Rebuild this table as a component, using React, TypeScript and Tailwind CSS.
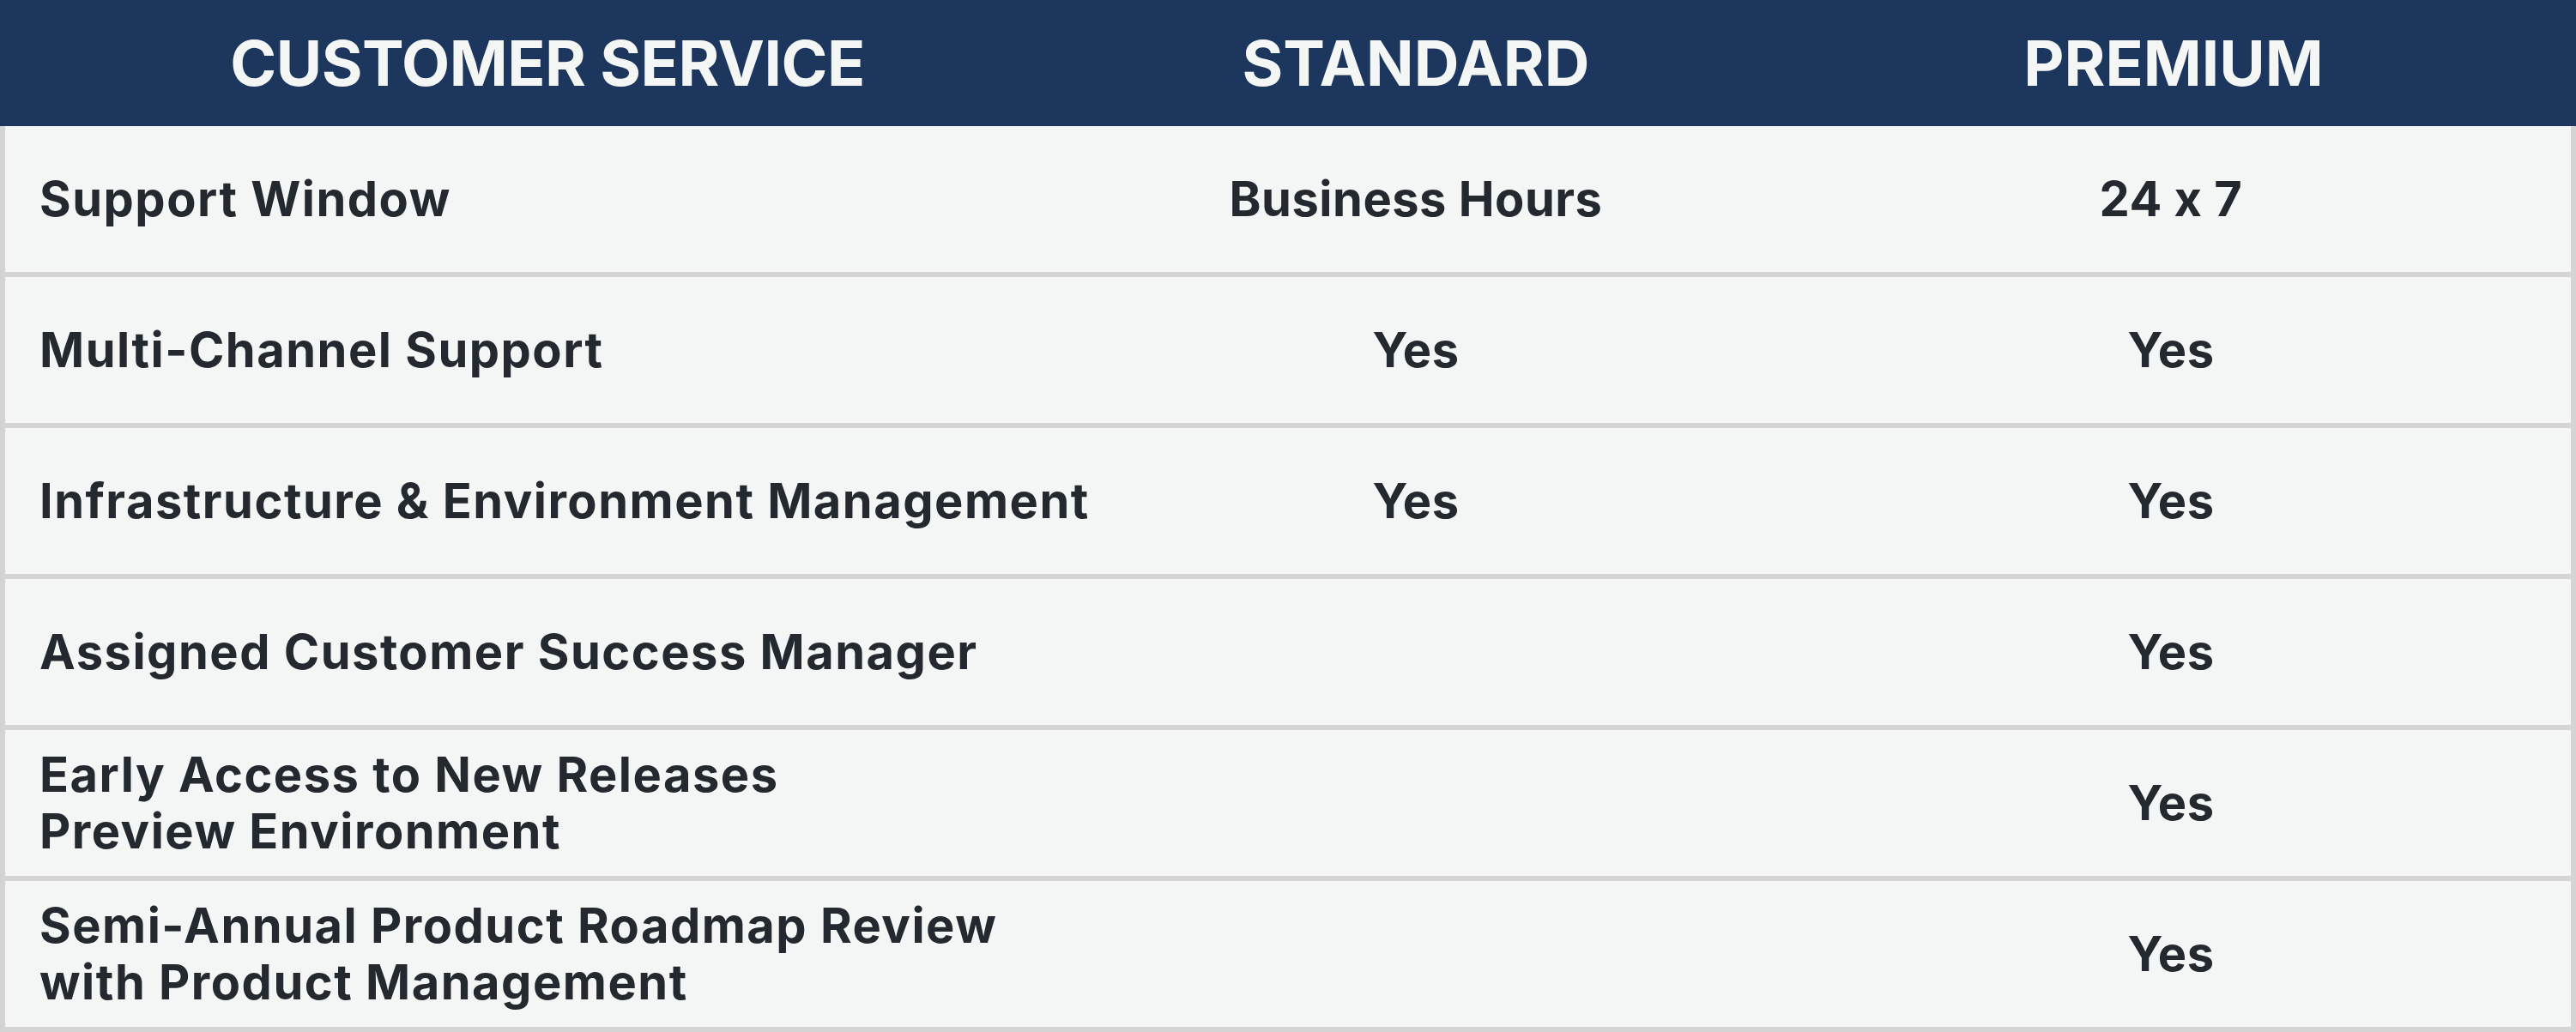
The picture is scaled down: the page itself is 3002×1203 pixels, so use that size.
const ROWS: { label: string[]; standard?: string; premium: string }[] = [
  { label: ['Support Window'], standard: 'Business Hours', premium: '24 x 7' },
  { label: ['Multi-Channel Support'], standard: 'Yes', premium: 'Yes' },
  { label: ['Infrastructure & Environment Management'], standard: 'Yes', premium: 'Yes' },
  { label: ['Assigned Customer Success Manager'], premium: 'Yes' },
  { label: ['Early Access to New Releases', 'Preview Environment'], premium: 'Yes' },
  { label: ['Semi-Annual Product Roadmap Review', 'with Product Management'], premium: 'Yes' },
];

export default function App() {
  return (
    <div className="w-[3002px] h-[1203px] bg-[#d4d4d4] font-['Inter',sans-serif] text-[#23292f] [font-feature-settings:'calt'_0]">
      <div className="flex h-[147px] items-center bg-[#1c365e] text-[#f4f6f5] text-[73px] font-bold">
        <div className="w-[1276px] text-center tracking-[-0.5px]">CUSTOMER SERVICE</div>
        <div className="w-[748px] text-center">STANDARD</div>
        <div className="flex-1 pl-[40px] text-center">PREMIUM</div>
      </div>
      {ROWS.map((row) => (
        <div
          key={row.label[0]}
          className="flex h-[176px] items-center border-x-[6px] border-b-[6px] border-[#d4d4d4] bg-[#f4f6f5] text-[56px] font-bold leading-[66px] tracking-[1.5px]"
        >
          <div className="w-[1270px] pl-[40px]">
            {row.label.map((line) => (
              <div key={line}>{line}</div>
            ))}
          </div>
          <div className="w-[748px] text-center tracking-[0.5px]">{row.standard ?? ''}</div>
          <div className="flex-1 pl-[40px] text-center tracking-[0.5px]">{row.premium}</div>
        </div>
      ))}
    </div>
  );
}
